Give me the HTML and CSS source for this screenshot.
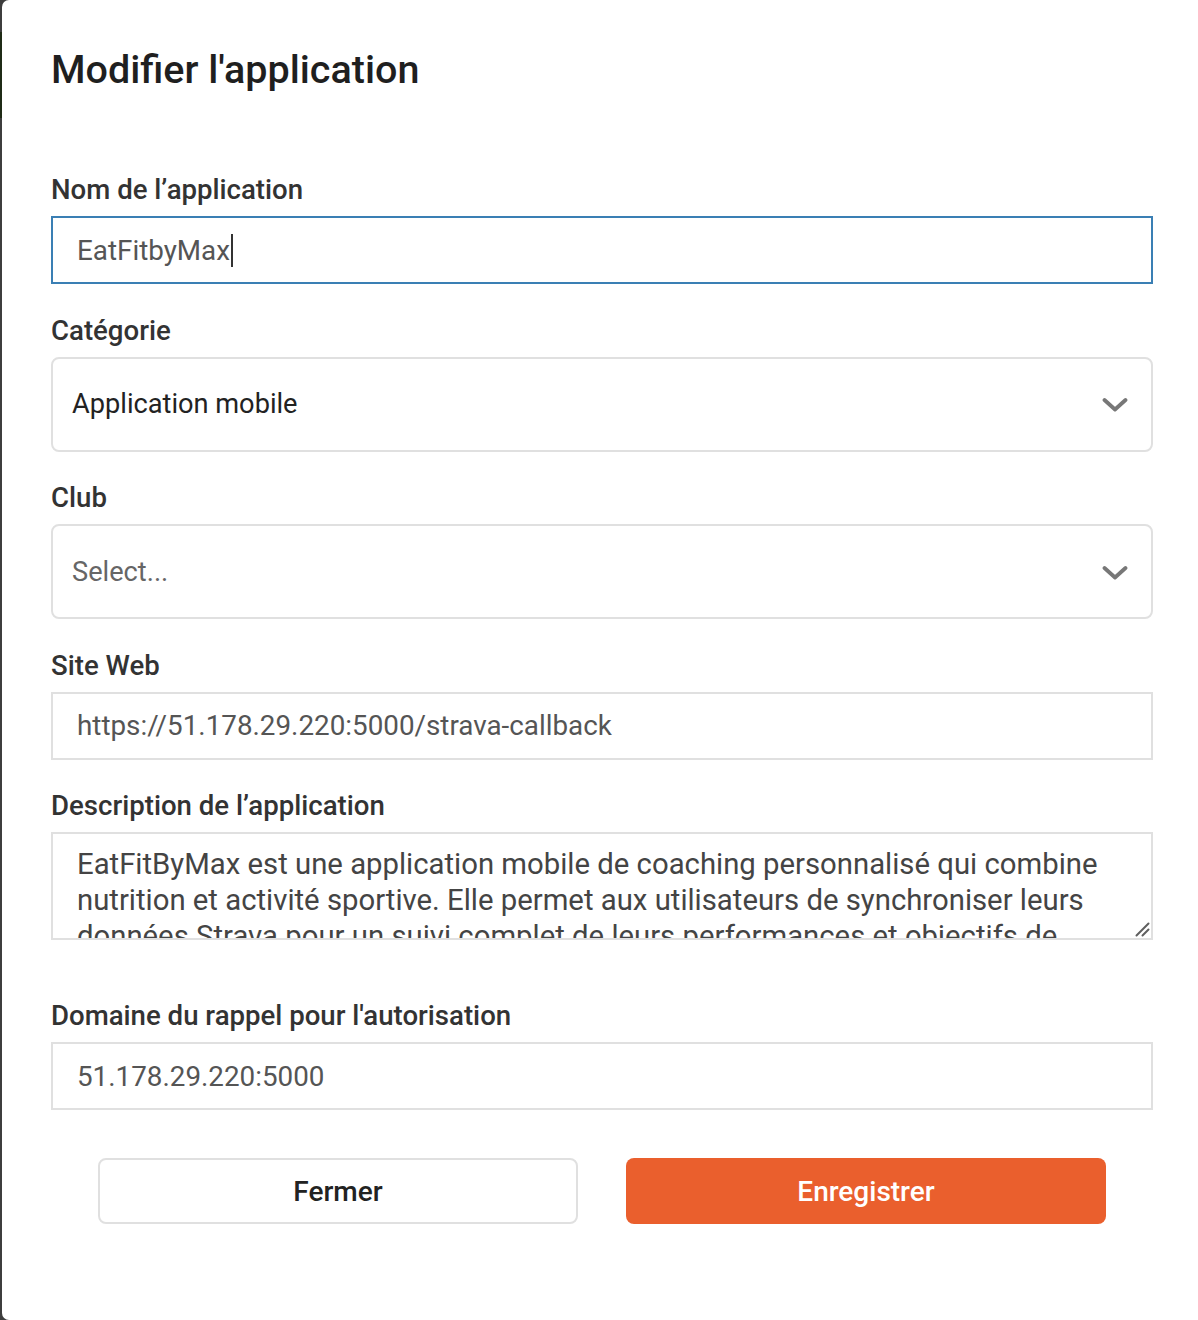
FILE: index.html
```html
<!DOCTYPE html>
<html lang="fr">
<head>
<meta charset="utf-8">
<title>Modifier l'application</title>
<link rel="stylesheet" href="styles.css">
</head>
<body>
<div class="modal">
  <h1 class="title">Modifier l'application</h1>
  <form class="form">
    <div class="field">
      <label class="label">Nom de l’application</label>
      <div class="input input--focus"><span class="value">EatFitbyMax</span><span class="caret"></span></div>
    </div>
    <div class="field">
      <label class="label">Catégorie</label>
      <div class="select">
        <span class="select-value">Application mobile</span>
        <svg class="chevron" width="26" height="16" viewBox="0 0 26 16"><path d="M2.5 3 L13 12.5 L23.5 3" fill="none" stroke="#777" stroke-width="3.8" stroke-linecap="round" stroke-linejoin="round"/></svg>
      </div>
    </div>
    <div class="field">
      <label class="label">Club</label>
      <div class="select">
        <span class="select-value select-value--placeholder">Select...</span>
        <svg class="chevron" width="26" height="16" viewBox="0 0 26 16"><path d="M2.5 3 L13 12.5 L23.5 3" fill="none" stroke="#777" stroke-width="3.8" stroke-linecap="round" stroke-linejoin="round"/></svg>
      </div>
    </div>
    <div class="field">
      <label class="label">Site Web</label>
      <div class="input"><span class="value">https://51.178.29.220:5000/strava-callback</span></div>
    </div>
    <div class="field field--textarea">
      <label class="label">Description de l’application</label>
      <div class="textarea-wrap">
        <textarea class="textarea" rows="3">EatFitByMax est une application mobile de coaching personnalisé qui combine nutrition et activité sportive. Elle permet aux utilisateurs de synchroniser leurs données Strava pour un suivi complet de leurs performances et objectifs de santé.</textarea>
        <svg class="resize-grip" width="18" height="18" viewBox="0 0 18 18"><path d="M15.5 3.5 L3.5 15.5 M15.5 9.5 L9.5 15.5" stroke="#5f5f5f" stroke-width="2" stroke-linecap="round"/></svg>
      </div>
    </div>
    <div class="field field--last">
      <label class="label">Domaine du rappel pour l'autorisation</label>
      <div class="input"><span class="value">51.178.29.220:5000</span></div>
    </div>
    <div class="actions">
      <button type="button" class="btn btn--secondary">Fermer</button>
      <button type="button" class="btn btn--primary">Enregistrer</button>
    </div>
  </form>
</div>
</body>
</html>
```
FILE: styles.css
```css
html, body {
  margin: 0;
  padding: 0;
}
body {
  height: 1320px;
  overflow: hidden;
  background: linear-gradient(to bottom, #3d3d3d 0, #3d3d3d 32px, #1f2b16 32px, #1f2b16 118px, #3d3d3d 118px);
  font-family: Roboto, "Liberation Sans", Arial, sans-serif;
  color: #2b2b2b;
}
.modal {
  margin-left: 2px;
  height: 1320px;
  box-sizing: border-box;
  background: #fff;
  border-radius: 7px 0 0 7px;
  padding: 46px 45px 0 49px;
}
.title {
  margin: 0;
  font-size: 39.5px;
  line-height: 48px;
  font-weight: 500;
  color: #1f1f1f;
}
.form {
  margin-top: 80px;
}
.field {
  margin-bottom: 30.5px;
}
.field--textarea {
  margin-bottom: 60px;
}
.field--last {
  margin-bottom: 48px;
}
.label {
  display: block;
  font-size: 27.6px;
  line-height: 32px;
  font-weight: 500;
  color: #333;
  margin-bottom: 10px;
}
.input {
  height: 68px;
  box-sizing: border-box;
  border: 2px solid #e0e0e0;
  padding: 0 24px;
  display: flex;
  align-items: center;
  font-size: 27.8px;
  color: #555;
}
.input--focus {
  border-color: #3a7fb4;
}
.caret {
  display: inline-block;
  width: 2px;
  height: 33px;
  background: #333;
  margin-left: 1px;
}
.select {
  height: 95px;
  box-sizing: border-box;
  border: 2px solid #e0e0e0;
  border-radius: 8px;
  padding: 0 23px 0 19px;
  display: flex;
  align-items: center;
  justify-content: space-between;
}
.select-value {
  font-size: 27.2px;
  color: #222;
}
.select-value--placeholder {
  color: #666;
}
.chevron {
  display: block;
  margin-top: 2px;
}
.textarea-wrap {
  position: relative;
}
.textarea {
  display: block;
  width: 100%;
  height: 108px;
  box-sizing: border-box;
  border: 2px solid #e0e0e0;
  border-radius: 0;
  padding: 12px 24px 0 24px;
  margin: 0;
  font-family: Roboto, "Liberation Sans", Arial, sans-serif;
  font-size: 29.3px;
  line-height: 36px;
  color: #444;
  overflow: hidden;
  resize: none;
  outline: none;
}
.resize-grip {
  position: absolute;
  right: 2px;
  bottom: 2px;
  pointer-events: none;
}
.actions {
  display: flex;
  justify-content: center;
  gap: 48px;
}
.btn {
  width: 480px;
  height: 66px;
  border-radius: 8px;
  font-family: Roboto, "Liberation Sans", Arial, sans-serif;
  font-size: 28px;
  font-weight: 500;
  cursor: pointer;
}
.btn--secondary {
  background: #fff;
  border: 2px solid #e0e0e0;
  color: #222;
}
.btn--primary {
  background: #ea5f2d;
  border: none;
  color: #fff;
}
```
